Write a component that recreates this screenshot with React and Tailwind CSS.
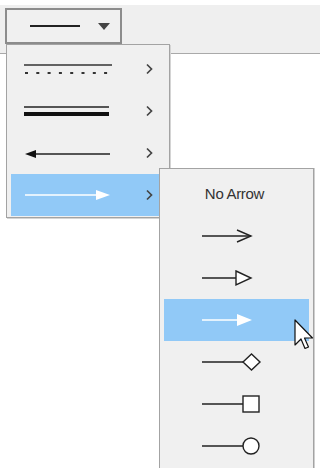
import React from 'react'

const font = { fontFamily: '"Liberation Sans", Arial, sans-serif' }

function Chevron() {
  return (
    <svg width="9" height="12" viewBox="0 0 9 12" className="shrink-0">
      <path d="M2 1.5 L6.5 6 L2 10.5" fill="none" stroke="#444" strokeWidth="1.7" />
    </svg>
  )
}

function MainItem({ children, active }) {
  return (
    <div className={`h-[42px] flex items-center pl-[13px] pr-[11px] ${active ? 'bg-[#91c9f7]' : ''}`}>
      <svg width="88" height="20" viewBox="0 0 88 20" className="shrink-0">{children}</svg>
      <div className="flex-1" />
      <Chevron />
    </div>
  )
}

function SubItem({ children, active }) {
  return (
    <div className={`h-[42px] flex items-center pl-[38px] ${active ? 'bg-[#91c9f7]' : ''}`}>
      <svg width="62" height="22" viewBox="0 0 62 22" className="shrink-0">{children}</svg>
    </div>
  )
}

export default function App() {
  return (
    <div className="relative w-[320px] h-[468px] bg-white overflow-hidden" style={font}>
      {/* toolbar */}
      <div className="mt-[5px] h-[49px] bg-[#efefef] border-b border-[#a9a9a9] pl-[5px] pt-[3px]">
        <div className="w-[117px] h-[36px] border-2 border-[#8c8c8c] bg-[#f0f0f0] flex items-center pl-[23px] gap-[18px]">
          <div className="w-[50px] h-[2px] bg-[#222]" />
          <svg width="12" height="7" viewBox="0 0 12 7">
            <path d="M0 0 H12 L6 7 Z" fill="#444" />
          </svg>
        </div>
      </div>

      {/* main menu */}
      <div className="absolute left-[6px] top-[44px] w-[164px] h-[174px] border border-[#a3a3a3] bg-[#f0f0f0] shadow-[1px_1px_0_#d4d4d4] px-[4px] pt-[3px]">
        <MainItem>
          <line x1="0" y1="6" x2="88" y2="6" stroke="#333" strokeWidth="1.5" />
          <line x1="1" y1="14" x2="88" y2="14" stroke="#333" strokeWidth="2" strokeDasharray="3 8.3" />
        </MainItem>
        <MainItem>
          <line x1="0" y1="6" x2="85" y2="6" stroke="#222" strokeWidth="1.5" />
          <line x1="0" y1="13" x2="85" y2="13" stroke="#111" strokeWidth="4" />
        </MainItem>
        <MainItem>
          <line x1="8" y1="11" x2="86" y2="11" stroke="#222" strokeWidth="1.5" />
          <path d="M1 11 L12 7 L12 15 Z" fill="#111" />
        </MainItem>
        <MainItem active>
          <line x1="1" y1="10" x2="76" y2="10" stroke="#fff" strokeWidth="1.5" />
          <path d="M72 5 L86 10 L72 15 Z" fill="#fff" />
        </MainItem>
      </div>

      {/* sub menu */}
      <div className="absolute left-[159px] top-[168px] w-[155px] h-[310px] border border-[#a3a3a3] bg-[#f0f0f0] shadow-[1px_0_0_#cfcfcf] px-[4px] pt-[4px]">
        <div className="h-[42px] flex items-center justify-center pr-[4px] text-[15px] text-[#333] tracking-[-0.3px]">
          No Arrow
        </div>
        <SubItem>
          <line x1="0" y1="11" x2="49" y2="11" stroke="#222" strokeWidth="1.4" />
          <path d="M35 5 L49 11 L35 17" fill="none" stroke="#222" strokeWidth="1.4" />
        </SubItem>
        <SubItem>
          <line x1="0" y1="11" x2="34" y2="11" stroke="#222" strokeWidth="1.4" />
          <path d="M34 4 L49 11 L34 18 Z" fill="#fff" stroke="#222" strokeWidth="1.4" />
        </SubItem>
        <SubItem active>
          <line x1="0" y1="11" x2="38" y2="11" stroke="#fff" strokeWidth="1.5" />
          <path d="M35 5 L50 11 L35 17 Z" fill="#fff" />
        </SubItem>
        <SubItem>
          <line x1="0" y1="11" x2="41" y2="11" stroke="#222" strokeWidth="1.4" />
          <path d="M41 11 L49.5 3 L58 11 L49.5 19 Z" fill="#fff" stroke="#222" strokeWidth="1.4" />
        </SubItem>
        <SubItem>
          <line x1="0" y1="11" x2="41" y2="11" stroke="#222" strokeWidth="1.4" />
          <rect x="41" y="3" width="16" height="16" fill="#fff" stroke="#222" strokeWidth="1.4" />
        </SubItem>
        <SubItem>
          <line x1="0" y1="11" x2="41" y2="11" stroke="#222" strokeWidth="1.4" />
          <circle cx="49" cy="11" r="8" fill="#fff" stroke="#222" strokeWidth="1.4" />
        </SubItem>
      </div>

      {/* cursor */}
      <svg className="absolute left-[294px] top-[319px]" width="22" height="34" viewBox="0 0 22 34">
        <path d="M1 1 L1 26 L7 20 L11 29.5 L14.5 28 L10.5 19 L18.5 19 Z" fill="#fff" stroke="#111" strokeWidth="1.2" strokeLinejoin="round" />
      </svg>
    </div>
  )
}
